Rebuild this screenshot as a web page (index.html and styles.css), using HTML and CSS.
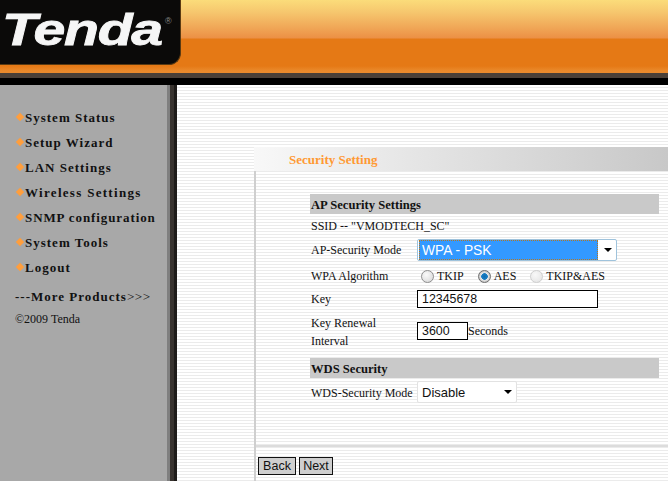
FILE: index.html
```html
<!DOCTYPE html>
<html lang="en">
<head>
<meta charset="utf-8">
<title>Tenda Security Setting</title>
<link rel="stylesheet" href="styles.css">
</head>
<body>
<header class="top">
  <div class="logo"><span class="logo-text">Tenda</span><span class="reg">®</span></div>
  <div class="top-rule"></div>
  <div class="top-line"></div>
  <div class="top-black"></div>
</header>
<div class="page">
  <nav class="side">
    <ul class="menu">
      <li>System Status</li>
      <li>Setup Wizard</li>
      <li>LAN Settings</li>
      <li class="wide">Wireless Settings</li>
      <li class="tight">SNMP configuration</li>
      <li>System Tools</li>
      <li>Logout</li>
    </ul>
    <div class="more">---More Products<span class="more-arrows">&gt;&gt;&gt;</span></div>
    <div class="copy">©2009 Tenda</div>
  </nav>
  <main class="main">
    <div class="title">Security Setting</div>
    <div class="panel">
      <div class="form">
        <div class="sec">AP Security Settings</div>
        <div class="row r-ssid"><span>SSID -- "VMODTECH_SC"</span></div>
        <div class="row r-mode">
          <label class="lbl">AP-Security Mode</label>
          <div class="sel sel-mode">
            <select class="sel-input sel-active"><option>WPA - PSK</option></select>
            <span class="arrow"></span>
          </div>
        </div>
        <div class="row r-algo">
          <span class="lbl">WPA Algorithm</span>
          <div class="radios">
            <label class="radio"><input type="radio" name="a">TKIP</label>
            <label class="radio"><input type="radio" name="a" checked>AES</label>
            <label class="radio"><input type="radio" name="a" disabled>TKIP&amp;AES</label>
          </div>
        </div>
        <div class="row r-key">
          <label class="lbl">Key</label>
          <input class="txt txt-key" type="text" value="12345678">
        </div>
        <div class="row r-renew">
          <label class="lbl lbl-two">Key Renewal Interval</label>
          <input class="txt txt-renew" type="text" value="3600"><span class="unit">Seconds</span>
        </div>
        <div class="sec">WDS Security</div>
        <div class="row r-wds">
          <label class="lbl">WDS-Security Mode</label>
          <div class="sel sel-wds">
            <select class="sel-input sel-plain"><option>Disable</option></select>
            <span class="arrow"></span>
          </div>
        </div>
      </div>
      <div class="actions">
        <button class="btn btn-back" type="button">Back</button>
        <button class="btn btn-next" type="button">Next</button>
      </div>
    </div>
  </main>
</div>
</body>
</html>
```
FILE: styles.css
```css
* { box-sizing: border-box; }
html, body { margin: 0; padding: 0; }
body {
  width: 668px;
  height: 481px;
  overflow: hidden;
  background: #fff;
  font-family: "Liberation Serif", serif;
  font-size: 12px;
  color: #111;
}

/* header */
.top {
  position: relative;
  height: 85px;
  background: linear-gradient(#fbdc7a 0, #f6c76e 12px, #f0a656 28px, #ec9045 38px, #e57915 39px, #e57915 66px, #ea8a2c 71px);
}
.top-rule { height: 73px; }
.top-line { height: 5px; background: #4a4038; }
.top-black { height: 7px; background: #000; }
.logo {
  position: absolute;
  left: 0;
  top: 0;
  width: 181px;
  height: 65px;
  background: #0b0a09;
  border-bottom-right-radius: 12px;
  border-right: 1px solid #5a3a12;
  border-bottom: 1px solid #5a3a12;
}
.logo-text {
  position: absolute;
  left: 2px;
  top: 5px;
  font-family: "Liberation Sans", sans-serif;
  font-weight: 700;
  font-style: italic;
  font-size: 44px;
  line-height: 50px;
  letter-spacing: -1px;
  color: #f6f6f6;
  -webkit-text-stroke: 0.8px #f6f6f6;
  transform: scaleX(1.3);
  transform-origin: left top;
}
.reg {
  position: absolute;
  left: 165px;
  top: 15px;
  font-family: "Liberation Sans", sans-serif;
  font-size: 9px;
  line-height: 12px;
  color: #8a8a8a;
}

/* layout */
.page { display: flex; height: 396px; }
.side {
  width: 177px;
  flex: none;
  background: #a8a8a8;
  border-right: 3px solid #1e1b19;
  box-shadow: inset -4px 0 0 #38332f, inset -7px 0 0 #7f7f7f;
  padding: 20px 0 0 15px;
  font-weight: 700;
}
.menu { list-style: none; margin: 0; padding: 0; }
.menu li {
  height: 25px;
  line-height: 25px;
  font-size: 13px;
  letter-spacing: 1px;
  padding-left: 10px;
  position: relative;
  white-space: nowrap;
}
.menu .wide { letter-spacing: 1.3px; }
.menu .tight { letter-spacing: 0.9px; }
.menu li::before {
  content: "";
  position: absolute;
  left: 2px;
  top: 9px;
  width: 6px;
  height: 6px;
  background: #ff9e3d;
  transform: rotate(45deg);
}
.more {
  margin-top: 7px;
  font-size: 13px;
  line-height: 20px;
  letter-spacing: 1px;
  white-space: nowrap;
}
.more-arrows { font-weight: 400; letter-spacing: 0.6px; }
.copy {
  margin-top: 2px;
  font-weight: 400;
  font-size: 12px;
  line-height: 20px;
  white-space: nowrap;
}
.main {
  flex: 1;
  min-width: 0;
  padding: 62px 0 0 77px;
  background: repeating-linear-gradient(#fff 0, #fff 2px, #ebebeb 2px, #ebebeb 3px);
}

/* title bar + panel */
.title {
  height: 24px;
  line-height: 26px;
  padding-left: 35px;
  font-weight: 700;
  font-size: 13px;
  color: #ff9933;
  background: linear-gradient(90deg, #f8f8f8, #c8c8c8);
}
.panel {
  height: 310px;
  border-left: 2px solid #cfcfcf;
}
.form {
  margin-left: 54px;
  padding-top: 23px;
  width: 349px;
}
.sec {
  height: 20px;
  line-height: 23px;
  padding-left: 1px;
  background: #c9c9c9;
  font-weight: 700;
  font-size: 12.6px;
}
.row { display: flex; align-items: center; padding-left: 1px; }
.lbl { width: 106px; flex: none; white-space: nowrap; }
.r-ssid { height: 24px; }
.r-mode { height: 24px; }
.r-algo { height: 28px; }
.r-key { height: 18px; }
.r-renew { height: 50px; align-items: flex-start; }
.r-wds { height: 28px; }
.r-wds .lbl { padding-top: 2px; }
.lbl-two { white-space: normal; line-height: 18px; padding: 6px 30px 0 0; }
.unit { margin-top: 15px; line-height: 16px; white-space: nowrap; }

/* selects */
.sel {
  position: relative;
  height: 22px;
  background: #fff;
  border: 1px solid #9fc3dc;
  border-radius: 2px;
}
.sel-mode { width: 200px; }
.sel-wds { width: 100px; border-color: #e2e2e2; }
.sel-input {
  appearance: none;
  -webkit-appearance: none;
  display: block;
  height: 20px;
  border: 0;
  border-radius: 0;
  outline: 0;
  padding: 0 0 0 4px;
  margin: 0;
  background: transparent;
  font-family: "Liberation Sans", sans-serif;
  font-size: 14px;
  color: #111;
  width: 100%;
}
.sel-plain { font-size: 13px; }
.sel-active {
  width: 179px;
  margin: 0 0 0 1px;
  padding-left: 3px;
  font-size: 13.8px;
  background: #3399ff;
  color: #fff;
  outline: 1px dotted #b5761f;
  outline-offset: -1px;
}
.arrow {
  position: absolute;
  right: 4px;
  top: 8px;
  width: 0;
  height: 0;
  border-left: 4px solid transparent;
  border-right: 4px solid transparent;
  border-top: 4px solid #000;
}

/* radios */
.radios { display: flex; }
.radio { display: flex; align-items: center; margin-right: 10px; font-size: 12px; }
.radio input {
  appearance: none;
  -webkit-appearance: none;
  width: 13px;
  height: 13px;
  margin: 0 3px 0 4px;
  border-radius: 50%;
  border: 1px solid #8f8f8f;
  background: radial-gradient(circle at 40% 35%, #fafafa, #d5d5d5);
}
.radio input:checked {
  background: radial-gradient(circle, #0f6cb0 0, #1a7fc4 3px, #e8e8e8 3.6px, #bdbdbd 6px);
  border-color: #6f6f6f;
}
.radio input:disabled { border-color: #cfcfcf; background: radial-gradient(circle at 40% 35%, #f8f8f8, #e2e2e2); }

/* text inputs */
.txt {
  height: 18px;
  border: 1px solid #000;
  border-radius: 0;
  padding: 0 0 0 4px;
  margin: 0;
  background: #fff;
  font-family: "Liberation Sans", sans-serif;
  font-size: 12.4px;
  color: #111;
  outline: 0;
}
.txt-key { width: 181px; }
.txt-renew { width: 51px; margin-top: 14px; }

/* footer actions */
.actions {
  margin-top: 39px;
  border-top: 2px solid #dcdcdc;
  padding: 10px 0 0 2px;
  display: flex;
  gap: 3px;
}
.btn {
  height: 18px;
  padding: 0;
  border: 1px solid #111;
  border-radius: 0;
  background: #cfcfcf;
  font-family: "Liberation Sans", sans-serif;
  font-size: 12.5px;
  line-height: 16px;
  color: #111;
}
.btn-back { width: 38px; }
.btn-next { width: 34px; }
```
